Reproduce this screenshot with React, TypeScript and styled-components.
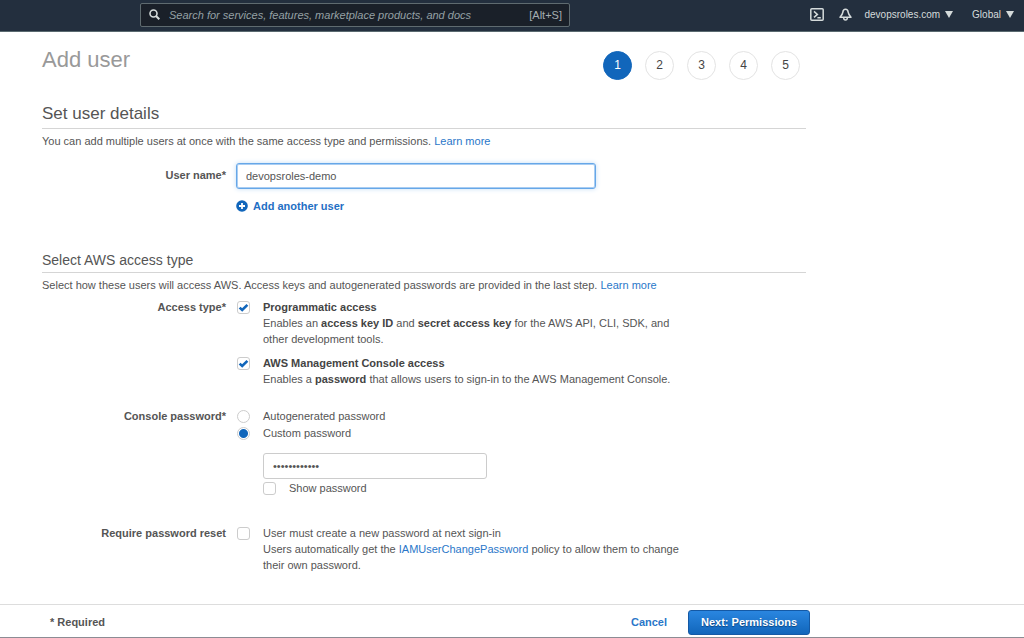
import React, { useState } from "react";
import styled, { createGlobalStyle, css } from "styled-components";

const GlobalStyle = createGlobalStyle`
  *, *::before, *::after { box-sizing: border-box; }
  body {
    margin: 0;
    background: #fff;
    color: #555;
    font: 11px/16px "Liberation Sans", Arial, sans-serif;
  }
  h1, h2, h3, p { margin: 0; font-weight: normal; }
  input, button { font: inherit; color: inherit; }
  b { color: #444; }
`;

const Page = styled.div`
  display: flex;
  flex-direction: column;
  min-height: 100vh;
  border-bottom: 1px solid #8c8c94;
`;

const TopBar = styled.header`
  display: flex;
  align-items: center;
  justify-content: space-between;
  height: 32px;
  padding: 0 10px 2px 140px;
  background: #232f3e;
  border-bottom: 1px solid #5a6a70;
  color: #d5dbdb;
`;

const SearchBox = styled.label`
  display: flex;
  align-items: center;
  gap: 9px;
  flex: 0 1 430px;
  height: 24px;
  padding: 0 7px 0 8px;
  background: #1a2029;
  border: 1px solid #5f6b70;
  border-radius: 2px;
  color: #a5adb0;
`;

const SearchInput = styled.input`
  flex: 1;
  min-width: 0;
  padding: 0;
  border: 0;
  outline: 0;
  background: none;
  &::placeholder { color: #95a0a5; font-style: italic; opacity: 1; }
`;

const Tools = styled.nav`
  display: flex;
  align-items: center;
`;

const ToolButton = styled.button<{ $space: number }>`
  display: flex;
  align-items: center;
  gap: 5px;
  margin-left: ${(p) => p.$space}px;
  padding: 0;
  border: 0;
  background: none;
  font-size: 10px;
  white-space: nowrap;
  cursor: pointer;
`;

const Main = styled.main`
  max-width: 848px;
  width: 100%;
  padding: 16px 42px 31px;
`;

const TitleRow = styled.div`
  display: flex;
  justify-content: space-between;
  padding-right: 6px;
`;

const Title = styled.h1`
  font-size: 22px;
  line-height: 24px;
  color: #999;
`;

const Steps = styled.ol`
  display: flex;
  gap: 13px;
  margin: 0;
  padding: 3px 0 0;
  list-style: none;
`;

const Step = styled.li<{ $current?: boolean }>`
  width: 29px;
  height: 29px;
  border: 1px solid #e3e3e3;
  border-radius: 50%;
  font-size: 12px;
  line-height: 27px;
  text-align: center;
  color: #444;
  ${(p) =>
    p.$current &&
    css`
      background: #1166bb;
      border-color: #1166bb;
      color: #fff;
    `}
`;

const SectionTitle = styled.h2<{ $minor?: boolean }>`
  margin-top: ${(p) => (p.$minor ? 36 : 22)}px;
  margin-bottom: 4px;
  padding-bottom: 2px;
  border-bottom: 1px solid #d5d5d5;
  font-size: ${(p) => (p.$minor ? 14 : 17)}px;
  line-height: ${(p) => (p.$minor ? 20 : 24)}px;
`;

const Link = styled.a`
  color: #2a77c9;
  text-decoration: none;
`;

const Field = styled.div<{ $space: number }>`
  display: grid;
  grid-template-columns: 184px minmax(0, 460px);
  column-gap: 10px;
  margin-top: ${(p) => p.$space}px;
`;

const FieldLabel = styled.label<{ $boxed?: boolean }>`
  padding-top: ${(p) => (p.$boxed ? 4 : 0)}px;
  font-weight: bold;
  text-align: right;
`;

const TextInput = styled.input<{ $width: number }>`
  display: block;
  width: 100%;
  max-width: ${(p) => p.$width}px;
  height: 26px;
  padding: 0 9px;
  border: 1px solid #ccc;
  border-radius: 3px;
  background: #fff;
  outline: 0;
  &:focus {
    border-color: #66a7e8;
    box-shadow: inset 0 0 0 1px #a9cdf2, 0 0 5px #c4ddf5;
  }
`;

const AddButton = styled.button`
  display: flex;
  align-items: center;
  gap: 5px;
  margin-top: 9px;
  padding: 0;
  border: 0;
  background: none;
  color: #1f6fc4;
  font-weight: bold;
  cursor: pointer;
`;

const Options = styled.div<{ $gap?: number }>`
  display: flex;
  flex-direction: column;
  gap: ${(p) => p.$gap ?? 0}px;
  padding-left: 1px;
`;

const Option = styled.label`
  display: grid;
  grid-template-columns: 13px 1fr;
  column-gap: 13px;
`;

const choice = css`
  appearance: none;
  width: 13px;
  height: 13px;
  margin: 2px 0 0;
  border: 1px solid #ccc;
  background: #fff center / 11px 11px no-repeat;
`;

const Checkbox = styled.input.attrs({ type: "checkbox" })`
  ${choice}
  border-radius: 3px;
  &:checked {
    background-image: url("data:image/svg+xml,%3Csvg xmlns='http://www.w3.org/2000/svg' viewBox='0 0 11 11'%3E%3Cpath d='M1.6 5.6 4.2 8 9.4 2.8' fill='none' stroke='%231166bb' stroke-width='2.6'/%3E%3C/svg%3E");
  }
`;

const Radio = styled.input.attrs({ type: "radio" })`
  ${choice}
  border-radius: 50%;
  &:checked { background-image: radial-gradient(circle, #1166bb 4px, transparent 5px); }
`;

const PasswordBlock = styled.div`
  display: grid;
  gap: 1px;
  padding: 11px 0 0 26px;
`;

const Footer = styled.footer`
  height: 33px;
  margin-top: auto;
  border-top: 1px solid #ddd;
  font-weight: bold;
`;

const FooterInner = styled.div`
  display: flex;
  align-items: center;
  justify-content: space-between;
  height: 100%;
  max-width: 810px;
  padding: 2px 0 0 50px;
`;

const Actions = styled.div`
  display: flex;
  align-items: center;
  gap: 21px;
`;

const CancelButton = styled.button`
  padding: 0;
  border: 0;
  background: none;
  color: #2a77c9;
  font-weight: bold;
  cursor: pointer;
`;

const NextButton = styled.button`
  height: 25px;
  padding: 0 12px;
  border: 1px solid #1459a5;
  border-radius: 3px;
  background: linear-gradient(#2a86e0, #1166bb);
  color: #fff;
  font-weight: bold;
  text-shadow: 0 1px 1px #0b4480;
  cursor: pointer;
`;

const Caret = () => (
  <svg width="8" height="7" viewBox="0 0 8 7" aria-hidden="true">
    <path d="M0 0h8L4 7z" fill="currentColor" />
  </svg>
);

export default function App() {
  const [name, setName] = useState("devopsroles-demo");
  const [password, setPassword] = useState("examplepass1");
  const [show, setShow] = useState(false);

  return (
    <Page>
      <GlobalStyle />
      <TopBar>
        <SearchBox>
          <svg width="11" height="11" viewBox="0 0 11 11" fill="none" stroke="#d5dbdb" aria-hidden="true">
            <circle cx="4.5" cy="4.5" r="3.5" strokeWidth="1.6" />
            <path d="M7 7l3.3 3.3" strokeWidth="2" />
          </svg>
          <SearchInput
            aria-label="Search"
            placeholder="Search for services, features, marketplace products, and docs"
          />
          <span>[Alt+S]</span>
        </SearchBox>
        <Tools>
          <ToolButton $space={0} aria-label="CloudShell">
            <svg width="14" height="13" viewBox="0 0 14 13" fill="none" stroke="currentColor" strokeWidth="1.5">
              <rect x="0.8" y="0.8" width="12.4" height="11.4" rx="1" />
              <path d="M4 3.4l3.4 3-3.4 3M7.4 9.8h3.4" />
            </svg>
          </ToolButton>
          <ToolButton $space={15} aria-label="Notifications">
            <svg width="13" height="13" viewBox="0 0 13 13" fill="none" stroke="currentColor" strokeWidth="1.5" strokeLinejoin="round">
              <path d="M6.5 1.3C4.9 1.3 4 2.5 3.8 4.4 3.6 6.2 2.6 7.2 1 9.2h11C10.4 7.2 9.4 6.2 9.2 4.4 9 2.5 8.1 1.3 6.5 1.3z" />
              <path d="M4.7 9.8c0 1.4.8 2.3 1.8 2.3s1.8-.9 1.8-2.3" />
            </svg>
          </ToolButton>
          <ToolButton $space={13}>
            devopsroles.com <Caret />
          </ToolButton>
          <ToolButton $space={19}>
            Global <Caret />
          </ToolButton>
        </Tools>
      </TopBar>

      <Main>
        <TitleRow>
          <Title>Add user</Title>
          <Steps>
            {[1, 2, 3, 4, 5].map((n) => (
              <Step key={n} $current={n === 1}>{n}</Step>
            ))}
          </Steps>
        </TitleRow>

        <SectionTitle>Set user details</SectionTitle>
        <p>
          You can add multiple users at once with the same access type and permissions.{" "}
          <Link href="#users">Learn more</Link>
        </p>
        <Field $space={14}>
          <FieldLabel htmlFor="user-name" $boxed>User name*</FieldLabel>
          <div>
            <TextInput id="user-name" $width={360} autoFocus value={name} onChange={(e) => setName(e.target.value)} />
            <AddButton>
              <svg width="12" height="12" viewBox="0 0 12 12" aria-hidden="true">
                <circle cx="6" cy="6" r="5.8" fill="#1166bb" />
                <path d="M6 3v6M3 6h6" stroke="#fff" strokeWidth="1.8" />
              </svg>
              Add another user
            </AddButton>
          </div>
        </Field>

        <SectionTitle $minor>Select AWS access type</SectionTitle>
        <p>
          Select how these users will access AWS. Access keys and autogenerated passwords are provided in the last
          step. <Link href="#access">Learn more</Link>
        </p>
        <Field $space={6} role="group" aria-labelledby="access-type">
          <FieldLabel as="span" id="access-type">Access type*</FieldLabel>
          <Options $gap={8}>
            <Option>
              <Checkbox defaultChecked />
              <span>
                <b>Programmatic access</b>
                <br />
                Enables an <b>access key ID</b> and <b>secret access key</b> for the AWS API, CLI, SDK, and other
                development tools.
              </span>
            </Option>
            <Option>
              <Checkbox defaultChecked />
              <span>
                <b>AWS Management Console access</b>
                <br />
                Enables a <b>password</b> that allows users to sign-in to the AWS Management Console.
              </span>
            </Option>
          </Options>
        </Field>

        <Field $space={21} role="group" aria-labelledby="console-password">
          <FieldLabel as="span" id="console-password">Console password*</FieldLabel>
          <Options $gap={1}>
            <Option>
              <Radio name="password-kind" />
              <span>Autogenerated password</span>
            </Option>
            <Option>
              <Radio name="password-kind" defaultChecked />
              <span>Custom password</span>
            </Option>
            <PasswordBlock>
              <TextInput
                type={show ? "text" : "password"}
                aria-label="Custom password"
                $width={224}
                value={password}
                onChange={(e) => setPassword(e.target.value)}
              />
              <Option>
                <Checkbox checked={show} onChange={(e) => setShow(e.target.checked)} />
                <span>Show password</span>
              </Option>
            </PasswordBlock>
          </Options>
        </Field>

        <Field $space={29}>
          <FieldLabel htmlFor="reset">Require password reset</FieldLabel>
          <Options>
            <Option>
              <Checkbox id="reset" />
              <span>
                User must create a new password at next sign-in
                <br />
                Users automatically get the <Link href="#policy">IAMUserChangePassword</Link> policy to allow them to
                change their own password.
              </span>
            </Option>
          </Options>
        </Field>
      </Main>

      <Footer>
        <FooterInner>
          <span>* Required</span>
          <Actions>
            <CancelButton>Cancel</CancelButton>
            <NextButton>Next: Permissions</NextButton>
          </Actions>
        </FooterInner>
      </Footer>
    </Page>
  );
}
